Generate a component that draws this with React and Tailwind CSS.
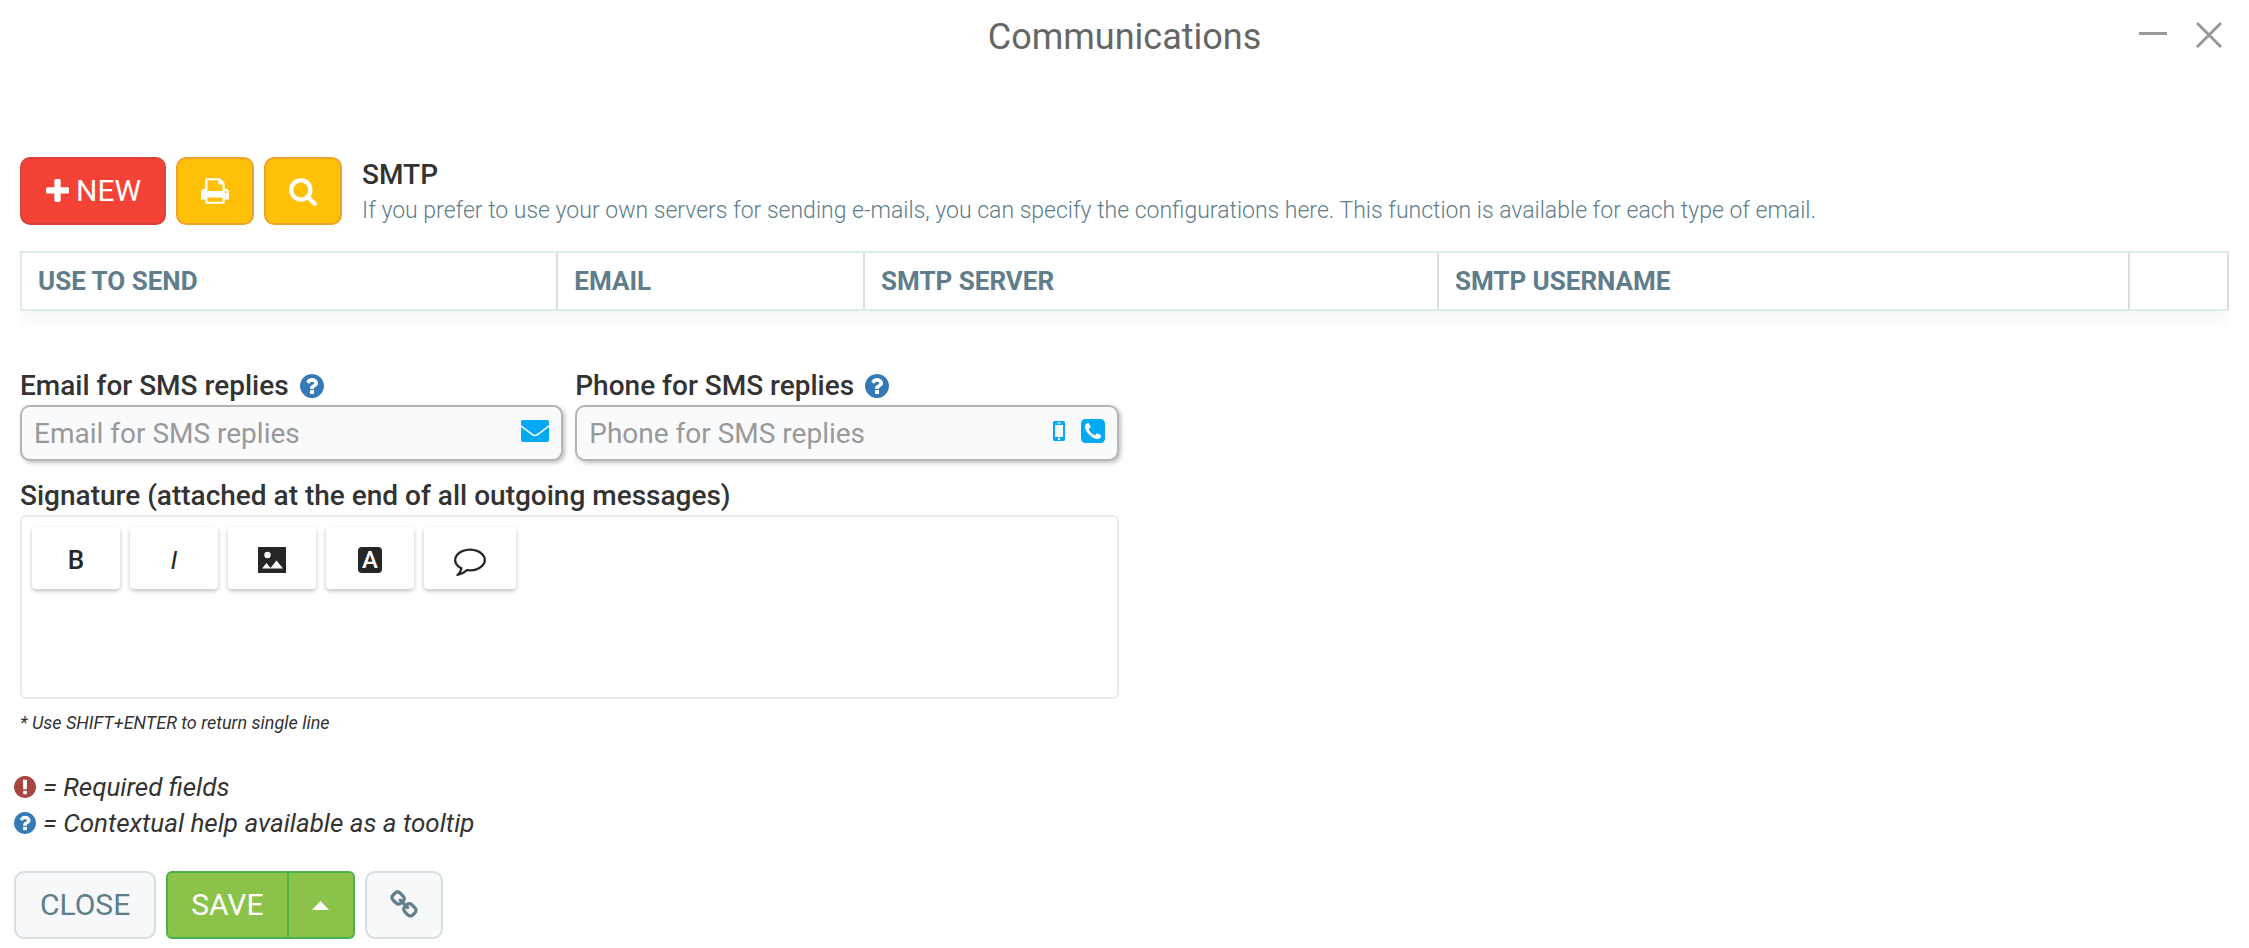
import { useState } from "react";
import { clsx } from "clsx";

const ICONS = {
    plus: "M1600 736v192q0 40-28 68t-68 28h-416v416q0 40-28 68t-68 28h-192q-40 0-68-28t-28-68v-416h-416q-40 0-68-28t-28-68v-192q0-40 28-68t68-28h416v-416q0-40 28-68t68-28h192q40 0 68 28t28 68v416h416q40 0 68 28t28 68z",
    print: "M448 1536h896v-256h-896v256zm0-640h896v-384h-160q-40 0-68-28t-28-68v-160h-640v640zm1152 64q0-26-19-45t-45-19-45 19-19 45 19 45 45 19 45-19 19-45zm128 0v416q0 13-9.500 22.500t-22.500 9.500h-224v160q0 40-28 68t-68 28h-960q-40 0-68-28t-28-68v-160h-224q-13 0-22.500-9.500t-9.500-22.500v-416q0-79 56.500-135.500t135.500-56.500h64v-544q0-40 28-68t68-28h672q40 0 88 20t76 48l152 152q28 28 48 76t20 88v256h64q79 0 135.500 56.500t56.500 135.500z",
    search: "M1216 832q0-185-131.500-316.500t-316.500-131.500-316.500 131.500-131.500 316.500 131.500 316.500 316.500 131.500 316.500-131.500 131.500-316.500zm512 832q0 52-38 90t-90 38q-54 0-90-38l-343-342q-179 124-399 124-143 0-273.500-55.500t-225-150-150-225-55.500-273.500 55.500-273.500 150-225 225-150 273.500-55.500 273.500 55.500 225 150 150 225 55.500 273.500q0 220-124 399l343 343q37 37 37 90z",
    question: "M1024 1376v-192q0-14-9-23t-23-9h-192q-14 0-23 9t-9 23v192q0 14 9 23t23 9h192q14 0 23-9t9-23zm256-672q0-88-55.500-163t-138.500-116-170-41q-243 0-371 213-15 24 8 42l132 100q7 6 19 6 16 0 25-12 53-68 86-92 34-24 86-24 48 0 85.500 26t37.500 59q0 38-20 61t-68 45q-63 28-115.500 86.500t-52.500 125.500v36q0 14 9 23t23 9h192q14 0 23-9t9-23q0-19 21.500-49.500t54.500-49.500q32-18 49-28.500t46-35 44.500-48 28-60.500 12.500-81zm384 192q0 209-103 385.500t-279.500 279.500-385.500 103-385.500-103-279.500-279.500-103-385.500 103-385.500 279.500-279.500 385.500-103 385.500 103 279.500 279.500 103 385.500z",
    exclamation: "M896 128q209 0 385.500 103t279.500 279.500 103 385.500-103 385.500-279.500 279.500-385.500 103-385.500-103-279.500-279.500-103-385.500 103-385.500 279.500-279.500 385.500-103zm128 1247v-190q0-14-9-23.500t-22-9.500h-192q-13 0-23 10t-10 23v190q0 13 10 23t23 10h192q13 0 22-9.500t9-23.500zm-2-344l18-621q0-12-10-18-10-8-24-8h-220q-14 0-24 8-10 6-10 18l17 621q0 10 10 17.500t24 7.500h185q14 0 23.500-7.500t10.500-17.500z",
    phone: "M1408 1193q0-11-2-16t-18-16.500-40.500-25-47.500-26.500-45.500-25-28.500-15q-5-3-19-13t-25-15-21-5q-15 0-36.500 20.500t-39.500 45-38.500 45-33.500 20.500q-7 0-16.500-3.500t-15.500-6.500-17-9.500-14-8.500q-99-55-170-126.500t-127-170.500q-2-3-8.500-14t-9.500-17-6.500-15.500-3.500-16.500q0-13 20.500-33.500t45-38.500 45-39.500 20.500-36.500q0-10-5-21t-15-25-13-19q-3-6-15-28.500t-25-45.500-26.500-47.500-25-40.500-16.500-18-16-2q-48 0-101 22-46 21-80 94.500t-34 130.500q0 16 2.500 34t5 30.500 9 33 10 29.500 12.500 33 11 30q60 164 216.500 320.500t320.500 216.500q6 2 30 11t33 12.500 29.500 10 33 9 30.500 5 34 2.500q57 0 130.500-34t94.500-80q22-53 22-101zm256-777v960q0 119-84.500 203.500t-203.500 84.500h-960q-119 0-203.500-84.500t-84.500-203.500v-960q0-119 84.500-203.500t203.500-84.500h960q119 0 203.500 84.500t84.500 203.500z",
    comment: "M896 384q-204 0-381.500 69.500t-282 187.500-104.500 255q0 112 71.500 213.500t201.500 175.500l87 50-27 96q-24 91-70 172 152-63 275-171l43-38 57 6q69 8 130 8 204 0 381.500-69.500t282-187.500 104.500-255-104.500-255-282-187.500-381.500-69.500zm896 512q0 174-120 321.500t-326 233-450 85.500q-70 0-145-8-198 175-460 242-49 14-114 22h-5q-15 0-27-10.500t-16-27.500v-1q-3-4-.5-12t2-10 4.500-9.500l6-9 7-8.500 8-9q7-8 31-34.500t34.500-38 31-39.500 32.500-51 27-59 26-76q-157-89-247.500-220t-90.500-281q0-174 120-321.500t326-233 450-85.500 450 85.500 326 233 120 321.500z",
    link: "M1520 1216q0-40-28-68l-208-208q-28-28-68-28-42 0-72 32 3 3 19 18.500t21.500 21.500 15 19 13 25.500 3.500 27.500q0 40-28 68t-68 28q-15 0-27.500-3.500t-25.500-13-19-15-21.500-21.500-18.500-19q-33 31-33 73 0 40 28 68l206 207q27 27 68 27 40 0 68-26l147-146q28-28 28-67zm-703-705q0-40-28-68l-206-207q-28-28-68-28-39 0-68 27l-147 146q-28 28-28 67 0 40 28 68l208 208q27 27 68 27 42 0 72-31-3-3-19-18.500t-21.500-21.500-15-19-13-25.500-3.500-27.500q0-40 28-68t68-28q15 0 27.500 3.500t25.500 13 19 15 21.500 21.500 18.500 19q33-31 33-73zm895 705q0 120-85 203l-147 146q-83 83-203 83-121 0-204-85l-206-207q-83-83-83-203 0-123 88-209l-88-88q-86 88-208 88-120 0-204-84l-208-208q-84-84-84-204t85-203l147-146q83-83 203-83 121 0 204 85l206 207q83 83 83 203 0 123-88 209l88 88q86-88 208-88 120 0 204 84l208 208q84 84 84 204z",
};

// tight drops the blank margin round the glyph
function Icon({ name, tight, className }) {
    return (
        <svg
            className={clsx("shrink-0", className)}
            viewBox={tight ? "128 128 1536 1536" : "0 0 1792 1792"}
            fill="currentColor"
            aria-hidden="true"
        >
            <path d={ICONS[name]} />
        </svg>
    );
}

function ToolButton({ label, className = "w-[88px]", onClick, children }) {
    return (
        <button
            type="button"
            aria-label={label}
            onClick={onClick}
            className={clsx("flex h-[62px] items-center justify-center rounded-sm bg-white pt-1 text-[#262626] shadow-[0_2px_4px_rgba(0,0,0,0.25)]", className)}
        >
            {children}
        </button>
    );
}

function Field({ id, label, type, value, onChange, children }) {
    return (
        <div className="flex-1">
            <div className="flex h-10 items-center gap-[11px] pt-0.5">
                <label htmlFor={id} className="text-[28px] leading-[38px] font-medium">{label}</label>
                <Icon name="question" tight className="size-6 text-[#337ab7]" />
            </div>
            <div className="flex h-14 items-center rounded-[10px] border-2 border-[#b5b5b5] bg-[#f8fafc] px-3 shadow-[2px_2px_4px_rgba(0,0,0,0.25)]">
                <input
                    id={id}
                    type={type}
                    placeholder={label}
                    value={value}
                    onChange={(e) => onChange(e.target.value)}
                    className="min-w-0 flex-1 bg-transparent pt-0.5 text-[28px] leading-[38px] outline-none placeholder:text-[#999]"
                />
                <div className="flex items-center gap-4 pb-1 text-[#03a9f4]">{children}</div>
            </div>
        </div>
    );
}

export default function App() {
    const [email, setEmail] = useState("");
    const [phone, setPhone] = useState("");
    const [signature, setSignature] = useState("");

    return (
        <div className="font-[Roboto,sans-serif] text-[#333]">
            {/* Title bar */}
            <header className="grid h-[157px] grid-cols-[1fr_auto_1fr] items-start">
                <h1 className="col-start-2 pt-[13px] text-4xl leading-[48px] text-[#666]">Communications</h1>
                <div className="flex justify-end gap-7 pt-[21px] pr-[26px] text-[#999]">
                    <button type="button" aria-label="Minimize">
                        <svg className="size-7" viewBox="0 0 28 28" stroke="currentColor" strokeWidth="3">
                            <path d="M0 12.500h28" />
                        </svg>
                    </button>
                    <button type="button" aria-label="Close window">
                        <svg className="size-7" viewBox="0 0 28 28" stroke="currentColor" strokeWidth="3">
                            <path d="M2 2l24 24M26 2L2 26" />
                        </svg>
                    </button>
                </div>
            </header>

            <main className="px-5">
                <section>
                    <div className="flex h-[94px] items-start gap-[10px]">
                        <button type="button" className="flex h-[68px] items-center gap-[6px] rounded-[10px] border-2 border-[#d9413a] bg-[#f44336] px-[23px] text-3xl text-white">
                            <Icon name="plus" tight className="size-[25px]" />
                            NEW
                        </button>
                        <button type="button" aria-label="Print" className="flex h-[68px] w-[78px] items-center justify-center rounded-[10px] border-2 border-[#f0a22e] bg-[#ffc107] text-white">
                            <Icon name="print" className="size-[30px]" />
                        </button>
                        <button type="button" aria-label="Search" className="flex h-[68px] w-[78px] items-center justify-center rounded-[10px] border-2 border-[#f0a22e] bg-[#ffc107] text-white">
                            <Icon name="search" className="size-[30px]" />
                        </button>
                        <div className="pl-[10px]">
                            <h2 className="text-[28px] leading-9 font-medium">SMTP</h2>
                            <p className="text-[23px] leading-9 font-light text-[#607d8b]">
                                If you prefer to use your own servers for sending e-mails, you can specify the configurations here. This function is available for each type of email.
                            </p>
                        </div>
                    </div>

                    <div className="overflow-x-clip">
                        <table className="w-full table-fixed border-separate border-spacing-0 border-y-2 border-l-2 border-[#e0e9ed] text-left text-[26px] leading-9 text-[#607d8b] shadow-[0_10px_14px_rgba(0,0,0,0.04)]">
                            <colgroup>
                                <col className="w-[24.3%]" />
                                <col className="w-[13.9%]" />
                                <col className="w-[26%]" />
                                <col />
                                <col className="w-[99px]" />
                            </colgroup>
                            <thead>
                                <tr className="h-14">
                                    <th className="border-r-2 border-[#ddd] px-4 font-bold">USE TO SEND</th>
                                    <th className="border-r-2 border-[#ddd] px-4 font-bold">EMAIL</th>
                                    <th className="border-r-2 border-[#ddd] px-4 font-bold">SMTP SERVER</th>
                                    <th className="border-r-2 border-[#ddd] px-4 font-bold">SMTP USERNAME</th>
                                    <th className="border-r-2 border-[#ddd] px-4" aria-label="Actions"></th>
                                </tr>
                            </thead>
                        </table>
                    </div>
                </section>

                <section className="w-1/2 pt-[54px] pr-[6px]">
                    <div className="flex gap-3">
                        <Field id="sms-email" label="Email for SMS replies" type="email" value={email} onChange={setEmail}>
                            <svg className="h-[22px] w-7" viewBox="0 0 28 22" fill="currentColor">
                                <path d="M2 0h24q2 0 2 2v3L16 14q-2 1.500-4 0L0 5V2q0-2 2-2zM0 7l11 8.200q3 2 6 0L28 7v13q0 2-2 2H2q-2 0-2-2z" />
                            </svg>
                        </Field>
                        <Field id="sms-phone" label="Phone for SMS replies" type="tel" value={phone} onChange={setPhone}>
                            <svg className="h-5 w-3" viewBox="0 0 12 20">
                                <rect width="12" height="20" rx="1.500" fill="currentColor" />
                                <path d="M2 4h8v12H2z" fill="#f8fafc" />
                                <circle cx="6" cy="18" r="1.200" fill="#f8fafc" />
                                <path d="M4 2h4" stroke="#f8fafc" />
                            </svg>
                            <Icon name="phone" tight className="size-6" />
                        </Field>
                    </div>

                    <label htmlFor="signature" className="mt-4 block text-[28px] leading-[38px] font-medium">
                        Signature (attached at the end of all outgoing messages)
                    </label>
                    <div className="rounded-md border-2 border-[#ebebeb] px-[10px] pt-[10px]">
                        <div className="flex gap-[10px]">
                            <ToolButton label="Bold"><span className="text-[26px] font-medium">B</span></ToolButton>
                            <ToolButton label="Italic"><span className="text-[26px] italic">I</span></ToolButton>
                            <ToolButton label="Image">
                                <svg className="h-[26px] w-7" viewBox="0 0 28 26">
                                    <path d="M0 0h28v26H0z" fill="currentColor" />
                                    <circle cx="9.500" cy="8" r="3.200" fill="#fff" />
                                    <path d="M4 21.500l4.500-5.500 4 5 6-7.500 6.500 8z" fill="#fff" />
                                </svg>
                            </ToolButton>
                            <ToolButton label="Font color">
                                <span className="flex h-[26px] w-6 items-center justify-center rounded-sm bg-[#262626] text-2xl leading-6 font-medium text-white">A</span>
                            </ToolButton>
                            <ToolButton label="Comment" className="w-[92px]">
                                <Icon name="comment" className="size-8" />
                            </ToolButton>
                        </div>
                        <textarea
                            id="signature"
                            value={signature}
                            onChange={(e) => setSignature(e.target.value)}
                            className="block h-[108px] w-full resize-none text-[26px] outline-none"
                        />
                    </div>
                    <p className="pt-2 text-lg leading-8 italic">* Use SHIFT+ENTER to return single line</p>
                </section>
            </main>

            <footer className="px-[14px] pt-[30px]">
                <p className="flex items-center gap-[7px] text-[26px] leading-9 italic">
                    <Icon name="exclamation" tight className="size-[22px] text-[#a94442]" /> = Required fields
                </p>
                <p className="flex items-center gap-[7px] text-[26px] leading-9 italic">
                    <Icon name="question" tight className="size-[22px] text-[#337ab7]" /> = Contextual help available as a tooltip
                </p>
                <div className="flex gap-[10px] pt-[30px] text-3xl">
                    <button type="button" className="h-[68px] rounded-[10px] border-2 border-[#d6dee1] bg-[#f6f8fa] px-6 text-[#607d8b]">CLOSE</button>
                    <div className="flex">
                        <button type="button" className="h-[68px] rounded-l-md border-2 border-[#4caf50] bg-[#8bc34a] px-[23px] text-white">SAVE</button>
                        <button type="button" aria-label="More save options" className="flex h-[68px] w-[66px] items-center justify-center rounded-r-md border-2 border-l-0 border-[#4caf50] bg-[#8bc34a] text-white">
                            <svg className="h-[9px] w-[17px]" viewBox="0 0 17 9" fill="currentColor"><path d="M0 9l8.500-9L17 9z" /></svg>
                        </button>
                    </div>
                    <button type="button" aria-label="Copy link" className="flex h-[68px] w-[78px] items-center justify-center rounded-[10px] border-2 border-[#d6dee1] bg-[#f6f8fa] text-[#607d8b]">
                        <Icon name="link" className="size-[30px]" />
                    </button>
                </div>
            </footer>
        </div>
    );
}
